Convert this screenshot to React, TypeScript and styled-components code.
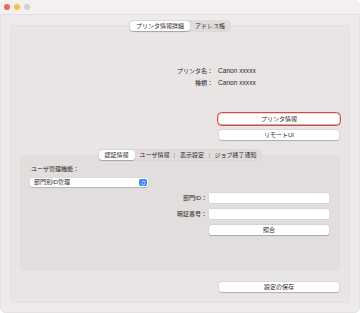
import React from 'react';
import styled, { createGlobalStyle } from 'styled-components';

const GlobalStyle = createGlobalStyle`
  html, body {
    margin: 0;
    padding: 0;
    background: #ffffff;
  }

  body {
    font-family: "Liberation Sans", "Noto Sans CJK JP", sans-serif;
    color: #2b2b2b;
  }
`;

const Window = styled.div`
  width: 360px;
  height: 313px;
  box-sizing: border-box;
  border-radius: 6px;
  background: #efebeb;
  box-shadow: inset 0 0 0 0.5px #dcd8d8;
  overflow: hidden;
  display: flex;
  flex-direction: column;
`;

const TitleBar = styled.div`
  height: 14px;
  background: #f4f0f0;
  border-bottom: 1px solid #e3dfdf;
  display: flex;
  align-items: center;
  gap: 4px;
  padding-left: 4px;
`;

const Light = styled.span<{ color: string }>`
  width: 6px;
  height: 6px;
  border-radius: 50%;
  background: ${props => props.color};
`;

const Content = styled.div`
  flex: 1;
  display: flex;
  flex-direction: column;
  padding: 6px 10px 10px;
`;

const TabBar = styled.div`
  align-self: center;
  display: flex;
  align-items: stretch;
  height: 10px;
  background: #e0dcdc;
  border-radius: 3px;
  box-shadow: 0 0 0 0.5px #d2cece;
  position: relative;
  z-index: 1;
`;

const Tab = styled.div<{ active?: boolean }>`
  padding: 0 ${props => (props.active ? 6 : 5)}px;
  font-size: 6px;
  line-height: 10px;
  white-space: nowrap;
  color: #2b2b2b;
  border-radius: 3px;
  background: ${props => (props.active ? '#ffffff' : 'transparent')};
  box-shadow: ${props =>
    props.active ? '0 0.5px 1px rgba(0, 0, 0, 0.25)' : 'none'};
`;

const TabSep = styled.span`
  width: 0.5px;
  height: 5px;
  align-self: center;
  background: #b8b4b4;
`;

const GroupBox = styled.div`
  flex: 1;
  margin-top: -6px;
  display: flex;
  flex-direction: column;
  background: #e9e5e5;
  border: 1px solid #e4e0e0;
  border-radius: 3px;
  padding: 0 9px 10px;
`;

const InfoGrid = styled.div`
  margin-top: 39px;
  display: grid;
  grid-template-columns: 193px 1fr;
  column-gap: 5px;
  grid-auto-rows: 12px;
  font-size: 6px;
  line-height: 12px;
`;

const InfoLabel = styled.span`
  text-align: right;
`;

const InfoValue = styled.span`
  font-size: 6.6px;
`;

const ButtonStack = styled.div<{ top: number }>`
  margin-top: ${props => props.top}px;
  margin-right: 1px;
  display: flex;
  flex-direction: column;
  align-items: flex-end;
  gap: 6px;
`;

const Button = styled.div<{ focused?: boolean }>`
  width: 120px;
  height: 10px;
  background: #ffffff;
  border-radius: 2.5px;
  box-shadow: 0 0.5px 1px rgba(0, 0, 0, 0.22), 0 0 0 0.5px rgba(0, 0, 0, 0.06);
  font-size: 6px;
  line-height: 10px;
  text-align: center;
  color: #2b2b2b;
  outline: ${props => (props.focused ? '1.5px solid #e2473c' : 'none')};
  outline-offset: 1px;
`;

const Section = styled.div`
  flex: 1;
  margin-top: 10px;
  display: flex;
  flex-direction: column;
`;

const InnerBox = styled.div`
  flex: 1;
  margin-top: -5px;
  background: #e2dede;
  border-radius: 3px;
  padding: 10px 10px 0;
  display: flex;
  flex-direction: column;
`;

const FieldCaption = styled.div`
  margin-left: 1px;
  font-size: 6px;
  line-height: 8px;
`;

const Select = styled.div`
  margin-top: 5px;
  width: 118px;
  height: 9px;
  box-sizing: border-box;
  background: #ffffff;
  border-radius: 2px;
  box-shadow: 0 0.5px 1px rgba(0, 0, 0, 0.2);
  display: flex;
  align-items: center;
  justify-content: space-between;
  padding: 0 1px 0 4px;
  font-size: 6px;
  line-height: 9px;
`;

const Stepper = styled.span`
  width: 8px;
  height: 7px;
  border-radius: 2px;
  background: #3d84ee;
  display: flex;
  align-items: center;
  justify-content: center;
`;

const FormGrid = styled.div`
  margin-top: 6px;
  display: grid;
  grid-template-columns: 177px 120px;
  column-gap: 2px;
  row-gap: 6px;
  grid-auto-rows: 10px;
  font-size: 6px;
  line-height: 10px;
`;

const FormLabel = styled.span`
  text-align: right;
`;

const TextField = styled.div`
  background: #ffffff;
  border-radius: 1.5px;
  box-shadow: 0 0 0 0.5px #d4d0d0, 0 0.5px 0.5px rgba(0, 0, 0, 0.08);
`;

const StepperIcon = () => (
  <svg width="5" height="6" viewBox="0 0 5 6">
    <path
      d="M1 2.2 L2.5 0.9 L4 2.2 M1 3.8 L2.5 5.1 L4 3.8"
      fill="none"
      stroke="#ffffff"
      strokeWidth="0.8"
      strokeLinecap="round"
      strokeLinejoin="round"
    />
  </svg>
);

const App = () => (
  <>
    <GlobalStyle />
    <Window>
      <TitleBar>
        <Light color="#ec6a5e" />
        <Light color="#f4bf4f" />
        <Light color="#d4d0d0" />
      </TitleBar>
      <Content>
        <TabBar>
          <Tab active>プリンタ情報詳細</Tab>
          <Tab>アドレス帳</Tab>
        </TabBar>
        <GroupBox>
          <InfoGrid>
            <InfoLabel>プリンタ名：</InfoLabel>
            <InfoValue>Canon xxxxx</InfoValue>
            <InfoLabel>種類：</InfoLabel>
            <InfoValue>Canon xxxxx</InfoValue>
          </InfoGrid>
          <ButtonStack top={25}>
            <Button focused>プリンタ情報</Button>
            <Button>リモートUI</Button>
          </ButtonStack>
          <Section>
            <TabBar>
              <Tab active>認証情報</Tab>
              <Tab>ユーザ情報</Tab>
              <TabSep />
              <Tab>表示設定</Tab>
              <TabSep />
              <Tab>ジョブ終了通知</Tab>
            </TabBar>
            <InnerBox>
              <FieldCaption>ユーザ管理機能：</FieldCaption>
              <Select>
                <span>部門別ID管理</span>
                <Stepper>
                  <StepperIcon />
                </Stepper>
              </Select>
              <FormGrid>
                <FormLabel>部門ID：</FormLabel>
                <TextField />
                <FormLabel>暗証番号：</FormLabel>
                <TextField />
                <span />
                <Button>照合</Button>
              </FormGrid>
            </InnerBox>
          </Section>
          <ButtonStack top={11}>
            <Button>設定の保存</Button>
          </ButtonStack>
        </GroupBox>
      </Content>
    </Window>
  </>
);

export default App;
